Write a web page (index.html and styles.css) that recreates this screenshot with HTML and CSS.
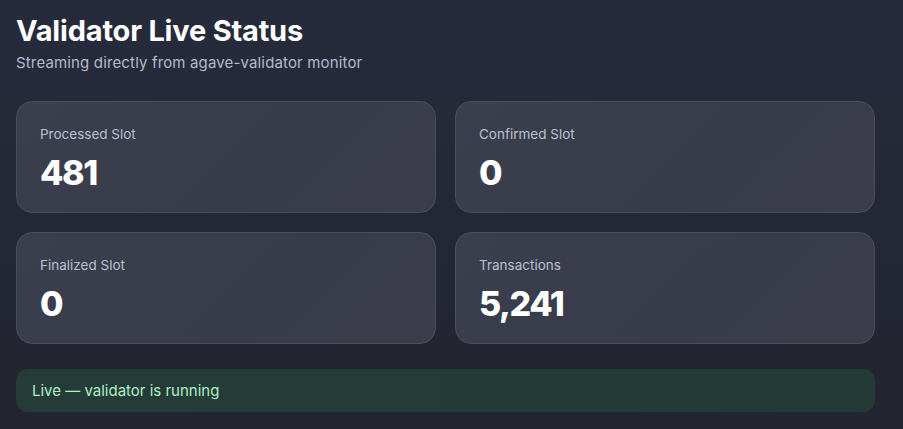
FILE: index.html
```html
<!DOCTYPE html>
<html lang="en">
<head>
<meta charset="utf-8">
<title>Validator Live Status</title>
<link rel="stylesheet" href="styles.css">
</head>
<body>
<main class="page">
  <h1 class="title">Validator Live Status</h1>
  <p class="subtitle">Streaming directly from agave-validator monitor</p>
  <section class="grid">
    <div class="card">
      <div class="label">Processed Slot</div>
      <div class="value">481</div>
    </div>
    <div class="card">
      <div class="label">Confirmed Slot</div>
      <div class="value">0</div>
    </div>
    <div class="card">
      <div class="label">Finalized Slot</div>
      <div class="value">0</div>
    </div>
    <div class="card">
      <div class="label">Transactions</div>
      <div class="value">5,241</div>
    </div>
  </section>
  <div class="status">Live — validator is running</div>
</main>
</body>
</html>
```

FILE: styles.css
```css
html, body {
  margin: 0;
  padding: 0;
}
body {
  min-height: 100vh;
  background: linear-gradient(180deg, #262b3c 0%, #22252f 100%);
  font-family: Inter, "Noto Sans", sans-serif;
  color: #ffffff;
}
.page {
  box-sizing: border-box;
  width: 891px;
  padding: 14px 16px 16px 16px;
}
.title {
  margin: 0;
  font-size: 29px;
  font-weight: 700;
  line-height: 34px;
  letter-spacing: -0.2px;
  color: #ffffff;
}
.subtitle {
  margin: 5px 0 0 0;
  font-size: 15px;
  line-height: 20px;
  letter-spacing: 0.15px;
  color: #b4bad0;
}
.grid {
  margin-top: 28px;
  display: grid;
  grid-template-columns: 1fr 1fr;
  gap: 19px 19px;
}
.card {
  box-sizing: border-box;
  height: 112px;
  padding: 23px 23px;
  border-radius: 16px;
  background: linear-gradient(135deg, #3a3e4d 0%, #383b4a 60%, #3b3d4a 100%);
  border: 1px solid #4a4e5c;
}
.label {
  font-size: 13.5px;
  line-height: 18px;
  color: #bcc0d2;
}
.value {
  margin-top: 12px;
  font-size: 34px;
  font-weight: 800;
  line-height: 36px;
  letter-spacing: -1.4px;
  color: #ffffff;
}
.status {
  margin-top: 25px;
  box-sizing: border-box;
  height: 43px;
  padding: 0 16px;
  display: flex;
  align-items: center;
  border-radius: 12px;
  background: linear-gradient(90deg, #243b38 0%, #233a36 100%);
  color: #b0f0c4;
  font-size: 15px;
}
```
